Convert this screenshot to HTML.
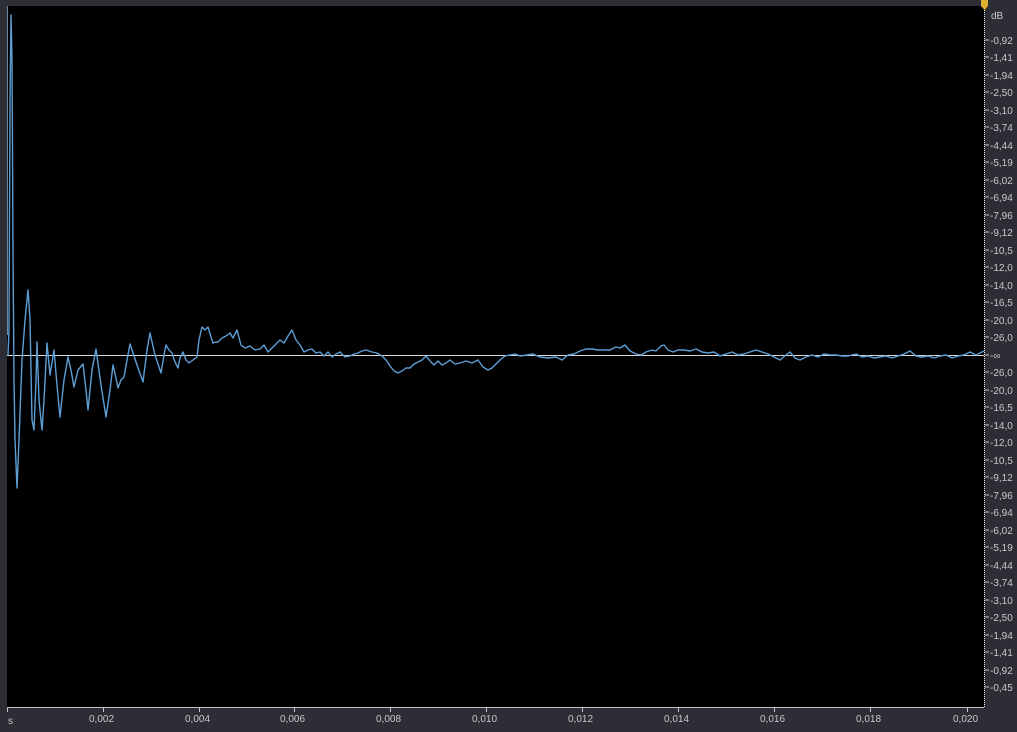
<!DOCTYPE html>
<html><head><meta charset="utf-8"><style>
html,body{margin:0;padding:0;width:1017px;height:732px;overflow:hidden;background:#2d2d35;font-family:"Liberation Sans",sans-serif;}
.plot{position:absolute;left:7px;top:6px;width:977px;height:701px;background:#000;}
.lab{position:absolute;font-size:10px;color:#c8c8cc;line-height:10px;margin-top:2px;}
</style></head><body>
<div class="plot"></div>
<svg width="1017" height="732" style="position:absolute;left:0;top:0">
<line x1="7" y1="355.5" x2="984" y2="355.5" stroke="#d8d8d8" stroke-width="1"/>
<line x1="7.5" y1="6" x2="7.5" y2="335" stroke="#6f8ba3" stroke-width="1"/>
<polyline fill="none" stroke="#5d9ed4" stroke-width="1.4" stroke-linejoin="round" points="8,355 9,330 10,100 11,15 12,60 13,250 14,380 15,440 17,488 19,440 22,360 25,320 28,290 30,320 32,420 34,430 36,380 37,342 39,400 42,430 44,400 47,343 50,375 54,350 57,385 60,417 64,380 68,357 71,370 74,387 78,370 83,364 86,390 88,410 92,370 96,349 101,385 106,417 110,390 113,365 116,378 118,388 121,380 124,377 127,360 130,344 136,362 143,382 147,350 150,333 155,355 161,373 164,355 166,345 169,350 172,353 175,362 178,368 180,358 183,352 186,360 189,363 193,360 197,357 199,340 202,327 205,330 208,327 211,337 213,343 216,342 218,342 222,338 226,336 230,333 233,338 237,330 241,345 245,348 250,346 255,350 260,349 264,345 268,352 272,348 276,344 280,340 284,343 288,336 292,330 296,340 300,345 304,352 308,350 312,349 316,353 320,352 324,356 328,352 332,357 336,354 340,352 345,357 350,356 354,354 358,353 362,351 366,350 372,352 377,353 382,356 386,360 390,366 394,371 398,373 402,371 406,368 410,368 414,364 418,362 422,360 426,356 430,361 434,365 438,361 442,365 446,363 450,360 455,364 460,363 466,361 472,363 478,360 483,367 488,370 492,368 496,364 500,360 505,356 510,355 515,354 520,356 527,355 533,354 540,357 548,358 556,357 562,360 568,355 574,354 580,351 586,349 592,349 598,350 604,350 610,350 616,347 620,348 625,345 630,351 636,354 641,355 646,352 652,350 656,351 661,346 664,345 668,350 673,352 678,350 684,350 690,351 696,349 702,352 708,353 714,352 720,356 726,354 732,352 738,355 744,354 750,352 756,350 762,352 768,354 774,357 780,360 786,355 790,352 795,358 800,360 806,357 812,355 818,357 824,354 830,355 836,355 842,356 848,356 856,354 862,357 868,356 874,358 880,357 886,356 892,358 898,356 904,354 910,351 916,356 922,357 928,356 934,358 940,356 946,355 952,358 958,356 964,355 970,352 976,355 980,353 984,351"/>
<line x1="984.5" y1="6" x2="984.5" y2="707" stroke="#e8e8e0" stroke-width="1" stroke-dasharray="1,1"/>
<g stroke="#c4c4c8" stroke-width="1">
<line x1="985" x2="989" y1="40" y2="40"/><line x1="985" x2="989" y1="57" y2="57"/><line x1="985" x2="989" y1="75" y2="75"/><line x1="985" x2="989" y1="92" y2="92"/><line x1="985" x2="989" y1="110" y2="110"/><line x1="985" x2="989" y1="127" y2="127"/><line x1="985" x2="989" y1="145" y2="145"/><line x1="985" x2="989" y1="162" y2="162"/><line x1="985" x2="989" y1="180" y2="180"/><line x1="985" x2="989" y1="197" y2="197"/><line x1="985" x2="989" y1="215" y2="215"/><line x1="985" x2="989" y1="232" y2="232"/><line x1="985" x2="989" y1="250" y2="250"/><line x1="985" x2="989" y1="267" y2="267"/><line x1="985" x2="989" y1="285" y2="285"/><line x1="985" x2="989" y1="302" y2="302"/><line x1="985" x2="989" y1="320" y2="320"/><line x1="985" x2="989" y1="337" y2="337"/><line x1="985" x2="989" y1="355" y2="355"/><line x1="985" x2="989" y1="372" y2="372"/><line x1="985" x2="989" y1="390" y2="390"/><line x1="985" x2="989" y1="407" y2="407"/><line x1="985" x2="989" y1="425" y2="425"/><line x1="985" x2="989" y1="442" y2="442"/><line x1="985" x2="989" y1="460" y2="460"/><line x1="985" x2="989" y1="477" y2="477"/><line x1="985" x2="989" y1="495" y2="495"/><line x1="985" x2="989" y1="512" y2="512"/><line x1="985" x2="989" y1="530" y2="530"/><line x1="985" x2="989" y1="547" y2="547"/><line x1="985" x2="989" y1="565" y2="565"/><line x1="985" x2="989" y1="582" y2="582"/><line x1="985" x2="989" y1="600" y2="600"/><line x1="985" x2="989" y1="617" y2="617"/><line x1="985" x2="989" y1="635" y2="635"/><line x1="985" x2="989" y1="652" y2="652"/><line x1="985" x2="989" y1="670" y2="670"/><line x1="985" x2="989" y1="687" y2="687"/>
</g>
<line x1="7" y1="707.5" x2="984" y2="707.5" stroke="#c4c4c8" stroke-width="1"/>
<g stroke="#c4c4c8" stroke-width="1">
<line x1="7.5" x2="7.5" y1="707" y2="712"/><line x1="103.5" x2="103.5" y1="707" y2="712"/><line x1="199.5" x2="199.5" y1="707" y2="712"/><line x1="294.5" x2="294.5" y1="707" y2="712"/><line x1="390.5" x2="390.5" y1="707" y2="712"/><line x1="486.5" x2="486.5" y1="707" y2="712"/><line x1="582.5" x2="582.5" y1="707" y2="712"/><line x1="678.5" x2="678.5" y1="707" y2="712"/><line x1="774.5" x2="774.5" y1="707" y2="712"/><line x1="870.5" x2="870.5" y1="707" y2="712"/><line x1="967.5" x2="967.5" y1="707" y2="712"/>
</g>
<path d="M981,0 h7 v6 l-3.5,4 l-3.5,-4z" fill="#e0b030"/>
</svg>
<div class="lab" style="left:991px;top:10px">dB</div>
<div class="lab" style="left:8px;top:715px">s</div>
<div class="lab" style="left:89px;top:713px">0,002</div>
<div class="lab" style="left:185px;top:713px">0,004</div>
<div class="lab" style="left:280px;top:713px">0,006</div>
<div class="lab" style="left:376px;top:713px">0,008</div>
<div class="lab" style="left:472px;top:713px">0,010</div>
<div class="lab" style="left:568px;top:713px">0,012</div>
<div class="lab" style="left:664px;top:713px">0,014</div>
<div class="lab" style="left:760px;top:713px">0,016</div>
<div class="lab" style="left:856px;top:713px">0,018</div>
<div class="lab" style="left:953px;top:713px">0,020</div>
<div class="lab" style="left:990px;top:35px">-0,92</div>
<div class="lab" style="left:990px;top:52px">-1,41</div>
<div class="lab" style="left:990px;top:70px">-1,94</div>
<div class="lab" style="left:990px;top:87px">-2,50</div>
<div class="lab" style="left:990px;top:105px">-3,10</div>
<div class="lab" style="left:990px;top:122px">-3,74</div>
<div class="lab" style="left:990px;top:140px">-4,44</div>
<div class="lab" style="left:990px;top:157px">-5,19</div>
<div class="lab" style="left:990px;top:175px">-6,02</div>
<div class="lab" style="left:990px;top:192px">-6,94</div>
<div class="lab" style="left:990px;top:210px">-7,96</div>
<div class="lab" style="left:990px;top:227px">-9,12</div>
<div class="lab" style="left:990px;top:245px">-10,5</div>
<div class="lab" style="left:990px;top:262px">-12,0</div>
<div class="lab" style="left:990px;top:280px">-14,0</div>
<div class="lab" style="left:990px;top:297px">-16,5</div>
<div class="lab" style="left:990px;top:315px">-20,0</div>
<div class="lab" style="left:990px;top:332px">-26,0</div>
<div class="lab" style="left:990px;top:350px">-∞</div>
<div class="lab" style="left:990px;top:367px">-26,0</div>
<div class="lab" style="left:990px;top:385px">-20,0</div>
<div class="lab" style="left:990px;top:402px">-16,5</div>
<div class="lab" style="left:990px;top:420px">-14,0</div>
<div class="lab" style="left:990px;top:437px">-12,0</div>
<div class="lab" style="left:990px;top:455px">-10,5</div>
<div class="lab" style="left:990px;top:472px">-9,12</div>
<div class="lab" style="left:990px;top:490px">-7,96</div>
<div class="lab" style="left:990px;top:507px">-6,94</div>
<div class="lab" style="left:990px;top:525px">-6,02</div>
<div class="lab" style="left:990px;top:542px">-5,19</div>
<div class="lab" style="left:990px;top:560px">-4,44</div>
<div class="lab" style="left:990px;top:577px">-3,74</div>
<div class="lab" style="left:990px;top:595px">-3,10</div>
<div class="lab" style="left:990px;top:612px">-2,50</div>
<div class="lab" style="left:990px;top:630px">-1,94</div>
<div class="lab" style="left:990px;top:647px">-1,41</div>
<div class="lab" style="left:990px;top:665px">-0,92</div>
<div class="lab" style="left:990px;top:682px">-0,45</div>
</body></html>
